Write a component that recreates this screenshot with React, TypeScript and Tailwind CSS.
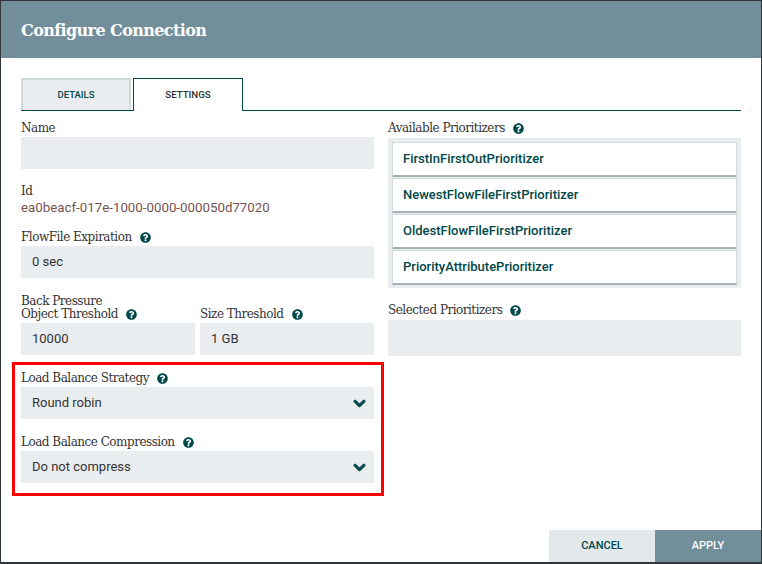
import { FaQuestionCircle, FaChevronDown } from "react-icons/fa";

function Label({ text, help, className = "" }: { text: string; help?: boolean; className?: string }) {
  return (
    <div className={`flex items-center h-[18px] text-[12px] leading-[18px] text-[#333333] font-['DejaVu_Serif',serif] tracking-[-0.5px] ${className}`}>
      <span>{text}</span>
      {help && <FaQuestionCircle className="ml-[8px] text-[#004849]" size={11} />}
    </div>
  );
}

function Field({ value, arrow }: { value?: string; arrow?: boolean }) {
  return (
    <div className="flex items-center justify-between h-[32px] bg-[#eaedf0] pl-[11px] pr-[8px] text-[13px] text-[#333333] font-['Roboto',sans-serif]">
      <span>{value}</span>
      {arrow && <FaChevronDown className="text-[#004849]" size={13} stroke="currentColor" strokeWidth={40} />}
    </div>
  );
}

function Prioritizer({ name }: { name: string }) {
  return (
    <div className="flex items-center h-[35px] pl-[10px] bg-white border border-[#cfdadd] border-b-2 border-b-[#a7b0b3] text-[13px] font-medium text-[#004849] font-['Roboto',sans-serif]">
      {name}
    </div>
  );
}

export default function App() {
  return (
    <div className="w-[762px] h-[564px] flex flex-col bg-white border-t border-l border-r border-b-2 border-[#30363a] overflow-hidden font-['Roboto',sans-serif]">
      <div className="h-[57px] shrink-0 bg-[#728e9b] flex items-center pl-[20px] pt-[3px]">
        <span className="text-white text-[16px] font-bold font-['DejaVu_Serif',serif] tracking-[-0.6px]">Configure Connection</span>
      </div>
      <div className="flex-1 px-[20px] pt-[20px] flex flex-col">
        <div className="flex h-[33px] border-b border-[#004849] w-[720px] shrink-0">
          <div className="w-[110px] h-[32px] flex items-center justify-center bg-[#eaedf0] border-2 border-b-0 border-[#cfdadd] text-[9.5px] font-medium text-[#004849]">DETAILS</div>
          <div className="ml-[2px] w-[110px] h-[33px] flex items-center justify-center bg-white border border-b-0 border-[#004849] text-[9.7px] font-medium text-[#333333]">SETTINGS</div>
        </div>
        <div className="flex gap-[14px] w-[720px] pt-[8px]">
          <div className="w-[353px] flex flex-col">
            <Label text="Name" />
            <Field />
            <Label text="Id" className="mt-[13px]" />
            <div className="h-[16px] leading-[16px] text-[13.3px] text-[#775351]">ea0beacf-017e-1000-0000-000050d77020</div>
            <Label text="FlowFile Expiration" help className="mt-[12px]" />
            <Field value="0 sec" />
            <div className="h-[13px] mt-[17px] leading-[13px] text-[12px] text-[#333333] font-['DejaVu_Serif',serif] tracking-[-0.5px]">Back Pressure</div>
            <div className="flex gap-[5px] -mt-[3px]">
              <div className="w-[174px]">
                <Label text="Object Threshold" help />
                <Field value="10000" />
              </div>
              <div className="w-[174px]">
                <Label text="Size Threshold" help />
                <Field value="1 GB" />
              </div>
            </div>
            <div className="-ml-[9px] -mr-[10px] mt-[7px] border-[3px] border-[#ff0000] pl-[6px] pr-[7px] pt-[3px] pb-[10px]">
              <Label text="Load Balance Strategy" help className="mt-[1px]" />
              <Field value="Round robin" arrow />
              <Label text="Load Balance Compression" help className="mt-[14px]" />
              <Field value="Do not compress" arrow />
            </div>
          </div>
          <div className="w-[353px] flex flex-col">
            <Label text="Available Prioritizers" help />
            <div className="mt-[1px] bg-[#eaedf0] p-[4px] pb-[3px] flex flex-col gap-[1px]">
              <Prioritizer name="FirstInFirstOutPrioritizer" />
              <Prioritizer name="NewestFlowFileFirstPrioritizer" />
              <Prioritizer name="OldestFlowFileFirstPrioritizer" />
              <Prioritizer name="PriorityAttributePrioritizer" />
            </div>
            <Label text="Selected Prioritizers" help className="mt-[13px]" />
            <div className="h-[36px] mt-[1px] bg-[#eaedf0]" />
          </div>
        </div>
      </div>
      <div className="flex justify-end shrink-0">
        <div className="w-[106px] h-[32px] flex items-center justify-center bg-[#e3e8eb] text-[11px] font-medium text-[#004849]">CANCEL</div>
        <div className="w-[106px] h-[32px] flex items-center justify-center bg-[#728e9b] text-[11px] font-medium text-white">APPLY</div>
      </div>
    </div>
  );
}
